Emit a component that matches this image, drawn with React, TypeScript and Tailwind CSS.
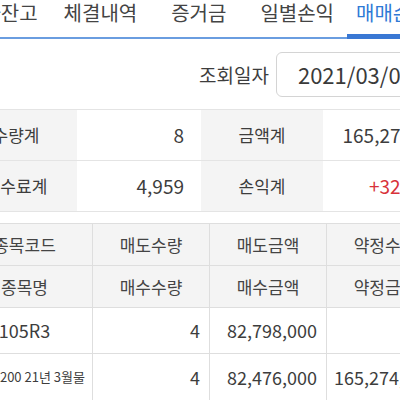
const FONT = "font-['Noto_Sans_CJK_KR','Noto_Sans',sans-serif]";

const TABS = [
  { label: "계좌잔고", ml: "ml-[-36px]" },
  { label: "체결내역", ml: "ml-[26px]" },
  { label: "증거금", ml: "ml-[34px]" },
  { label: "일별손익", ml: "ml-[34px]" },
];

const SUMMARY = [
  { l1: "수량계", v1: "8", l2: "금액계", v2: "165,274,000", red: false, h: "h-[52px] border-t" },
  { l1: "수수료계", v1: "4,959", l2: "손익계", v2: "+322,000", red: true, h: "h-[51px]" },
];

const HEAD = [
  ["종목코드", "매도수량", "매도금액", "약정수량"],
  ["종목명", "매수수량", "매수금액", "약정금액"],
];

const ROWS = [
  { name: "105R3", small: false, qty: "4", amt: "82,798,000", total: "", h: "h-[46px]" },
  { name: "코스피200 21년 3월물", small: true, qty: "4", amt: "82,476,000", total: "165,274,000", h: "h-[47px]" },
];

export default function App() {
  return (
    <div className={`${FONT} h-[400px] w-[400px] overflow-hidden bg-white text-[#3d3d3d]`}>
      {/* 탭 */}
      <div className="flex h-[39px] items-start whitespace-nowrap shadow-[inset_0_-2px_0_#6a9de0]">
        {TABS.map((t) => (
          <div key={t.label} className={`${t.ml} shrink-0 text-[20px] leading-[25px] text-[#444]`}>
            {t.label}
          </div>
        ))}
        <div className="ml-[13px] h-[39px] shrink-0 border-b-[5px] border-[#3a78d4] pl-[9px] pr-[10px] text-[20px] leading-[25px] text-[#2f7ad6]">
          매매손익
        </div>
      </div>

      {/* 조회일자 */}
      <div className="mt-[13px] flex items-center whitespace-nowrap pl-[199px]">
        <span className="text-[19px] leading-[26px]">조회일자</span>
        <div className="ml-[7px] flex h-[45px] w-[160px] shrink-0 items-center rounded-[6px] border border-[#d4d4d4] pl-[21px] text-[22px] text-[#3a3a3a]">
          2021/03/08
        </div>
      </div>

      {/* 합계 */}
      <div className="ml-[-45px] mt-[12px] w-[510px]">
        {SUMMARY.map((r) => (
          <div
            key={r.l1}
            className={`${r.h} grid grid-cols-[122px_124px_122px_142px] border-b border-[#e4e4e4]`}
          >
            <div className="flex items-center justify-center bg-[#f4f4f4] text-[17px]">{r.l1}</div>
            <div className="flex items-center justify-end pr-[17px] text-[19px]">{r.v1}</div>
            <div className="flex items-center justify-center bg-[#f4f4f4] text-[17px]">{r.l2}</div>
            <div
              className={`flex items-center justify-end whitespace-nowrap pr-[17px] text-[19px] ${
                r.red ? "text-[#d8323a]" : ""
              }`}
            >
              {r.v2}
            </div>
          </div>
        ))}
      </div>

      {/* 매매내역 표 */}
      <div className="ml-[-43px] mt-[11px] w-[487px] border-t border-[#dedede]">
        {HEAD.map((row, i) => (
          <div
            key={i}
            className="grid h-[42px] grid-cols-[136px_117px_117px_117px] border-b border-[#dedede] bg-[#f4f4f4]"
          >
            {row.map((c) => (
              <div
                key={c}
                className="flex items-center justify-center border-r border-[#dedede] text-[17px] text-[#444]"
              >
                {c}
              </div>
            ))}
          </div>
        ))}
        {ROWS.map((r) => (
          <div
            key={r.name}
            className={`${r.h} grid grid-cols-[136px_117px_117px_117px] border-b border-[#dedede]`}
          >
            <div
              className={`flex items-center justify-center whitespace-nowrap border-r border-[#dedede] ${
                r.small ? "text-[13px]" : "text-[18px]"
              }`}
            >
              {r.name}
            </div>
            <div className="flex items-center justify-end border-r border-[#dedede] pr-[9px] text-[18px]">
              {r.qty}
            </div>
            <div className="flex items-center justify-end border-r border-[#dedede] pr-[9px] text-[18px]">
              {r.amt}
            </div>
            <div className="flex items-center justify-end whitespace-nowrap border-r border-[#dedede] pr-[9px] text-[18px]">
              {r.total}
            </div>
          </div>
        ))}
      </div>
    </div>
  );
}
